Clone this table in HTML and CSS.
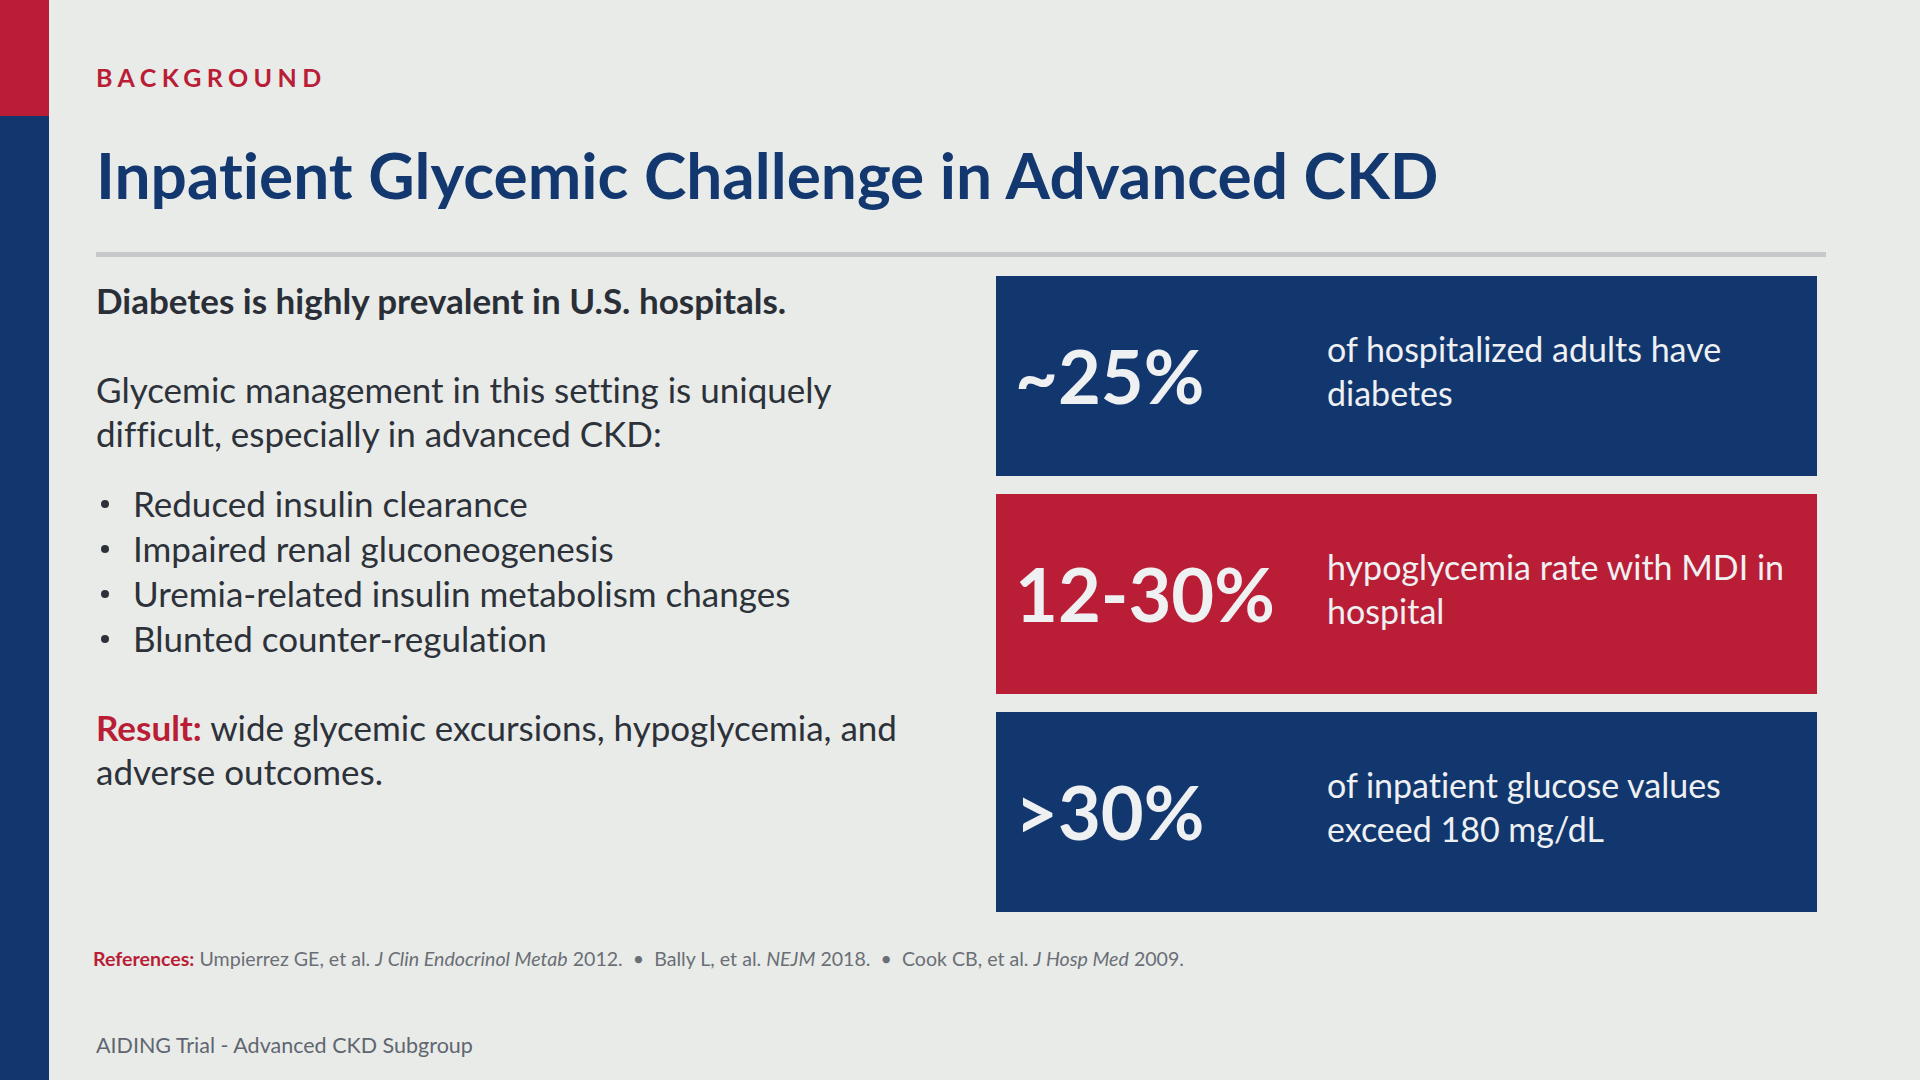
FILE: index.html
```html
<!DOCTYPE html>
<html lang="en">
<head>
<meta charset="utf-8">
<title>Inpatient Glycemic Challenge in Advanced CKD</title>
<link rel="stylesheet" href="styles.css">
</head>
<body>
<div class="slide">
  <aside class="sidebar">
    <div class="sidebar-red"></div>
    <div class="sidebar-navy"></div>
  </aside>
  <main class="main">
    <header class="header">
      <div class="eyebrow">BACKGROUND</div>
      <h1 class="title">Inpatient Glycemic Challenge in Advanced CKD</h1>
    </header>
    <div class="rule"></div>
    <section class="content">
      <div class="left">
        <p class="lead">Diabetes is highly prevalent in U.S. hospitals.</p>
        <p class="para">Glycemic management in this setting is uniquely difficult, especially in advanced CKD:</p>
        <ul class="bullets">
          <li>Reduced insulin clearance</li>
          <li>Impaired renal gluconeogenesis</li>
          <li>Uremia-related insulin metabolism changes</li>
          <li>Blunted counter-regulation</li>
        </ul>
        <p class="para result"><span class="result-label">Result:</span> <span>wide glycemic excursions, hypoglycemia, and</span><br><span>adverse outcomes.</span></p>
      </div>
      <div class="right">
        <div class="stat navy">
          <div class="stat-num">~25%</div>
          <div class="stat-desc">of hospitalized adults have diabetes</div>
        </div>
        <div class="stat red">
          <div class="stat-num">12-30%</div>
          <div class="stat-desc">hypoglycemia rate with MDI in hospital</div>
        </div>
        <div class="stat navy">
          <div class="stat-num">&gt;30%</div>
          <div class="stat-desc">of inpatient glucose values exceed 180 mg/dL</div>
        </div>
      </div>
    </section>
    <p class="refs"><span class="refs-label">References:</span> Umpierrez GE, et al. <i>J Clin Endocrinol Metab</i> 2012. &nbsp;&bull;&nbsp; Bally L, et al. <i>NEJM</i> 2018. &nbsp;&bull;&nbsp; Cook CB, et al. <i>J Hosp Med</i> 2009.</p>
    <footer class="footer">AIDING Trial - Advanced CKD Subgroup</footer>
  </main>
</div>
</body>
</html>
```
FILE: styles.css
```css
html, body {
  margin: 0;
  padding: 0;
}
body {
  background: #e9ebe8;
  font-family: Lato, "Open Sans", sans-serif;
  font-variant-ligatures: none;
  color: #2a2f37;
}
.slide {
  display: flex;
  width: 1920px;
  height: 1080px;
  overflow: hidden;
}
.sidebar {
  width: 49px;
  flex: 0 0 49px;
  display: flex;
  flex-direction: column;
}
.sidebar-red {
  height: 116px;
  background: #b91e36;
}
.sidebar-navy {
  flex: 1;
  background: #12376f;
}
.main {
  flex: 1;
  padding: 0 94px 0 47px;
  display: flex;
  flex-direction: column;
}
.header {
  padding-top: 62px;
}
.eyebrow {
  font-size: 25px;
  font-weight: 700;
  letter-spacing: 0.215em;
  color: #b91e36;
  line-height: 30px;
}
.title {
  margin: 45px 0 0 0;
  font-size: 64px;
  font-weight: 700;
  color: #13386f;
  line-height: 76px;
}
.rule {
  margin-top: 39px;
  height: 5px;
  background: #c5c9cc;
}
.content {
  display: grid;
  grid-template-columns: 900px 821px;
  margin-top: 19px;
}
.left {
  padding-top: 2px;
  max-width: 845px;
}
.lead {
  margin: 0;
  font-size: 35px;
  font-weight: 700;
  line-height: 44px;
  color: #2a2f37;
}
.para {
  margin: 45px 0 0 0;
  font-size: 35px;
  line-height: 44px;
  color: #2d323a;
}
.bullets {
  margin: 26px 0 0 0;
  padding: 0;
  list-style: none;
}
.bullets li {
  position: relative;
  padding-left: 37px;
  font-size: 35px;
  line-height: 45px;
  color: #2d323a;
}
.bullets li::before {
  content: "";
  position: absolute;
  left: 5px;
  top: 19px;
  width: 8px;
  height: 8px;
  border-radius: 50%;
  background: #2d323a;
}
.result {
  margin-top: 44px;
}
.result-label {
  color: #b91e36;
  font-weight: 700;
}
.right {
  display: flex;
  flex-direction: column;
  gap: 18px;
}
.stat {
  height: 200px;
  display: flex;
  align-items: center;
  padding-left: 19px;
  color: #eef0f2;
}
.stat.navy {
  background: #12376f;
}
.stat.red {
  background: #b91e36;
}
.stat-num {
  width: 312px;
  flex: 0 0 312px;
  font-size: 74px;
  font-weight: 700;
  line-height: 1;
}
.stat-desc {
  font-size: 34px;
  line-height: 44px;
  padding-right: 24px;
  margin-top: -10px;
}
.refs {
  margin: 35px 0 0 -3px;
  font-size: 19.6px;
  line-height: 24px;
  color: #6a6f76;
}
.refs-label {
  color: #b91e36;
  font-weight: 700;
}
.footer {
  margin-top: 61px;
  font-size: 21.5px;
  line-height: 26px;
  color: #5f6670;
}
```
